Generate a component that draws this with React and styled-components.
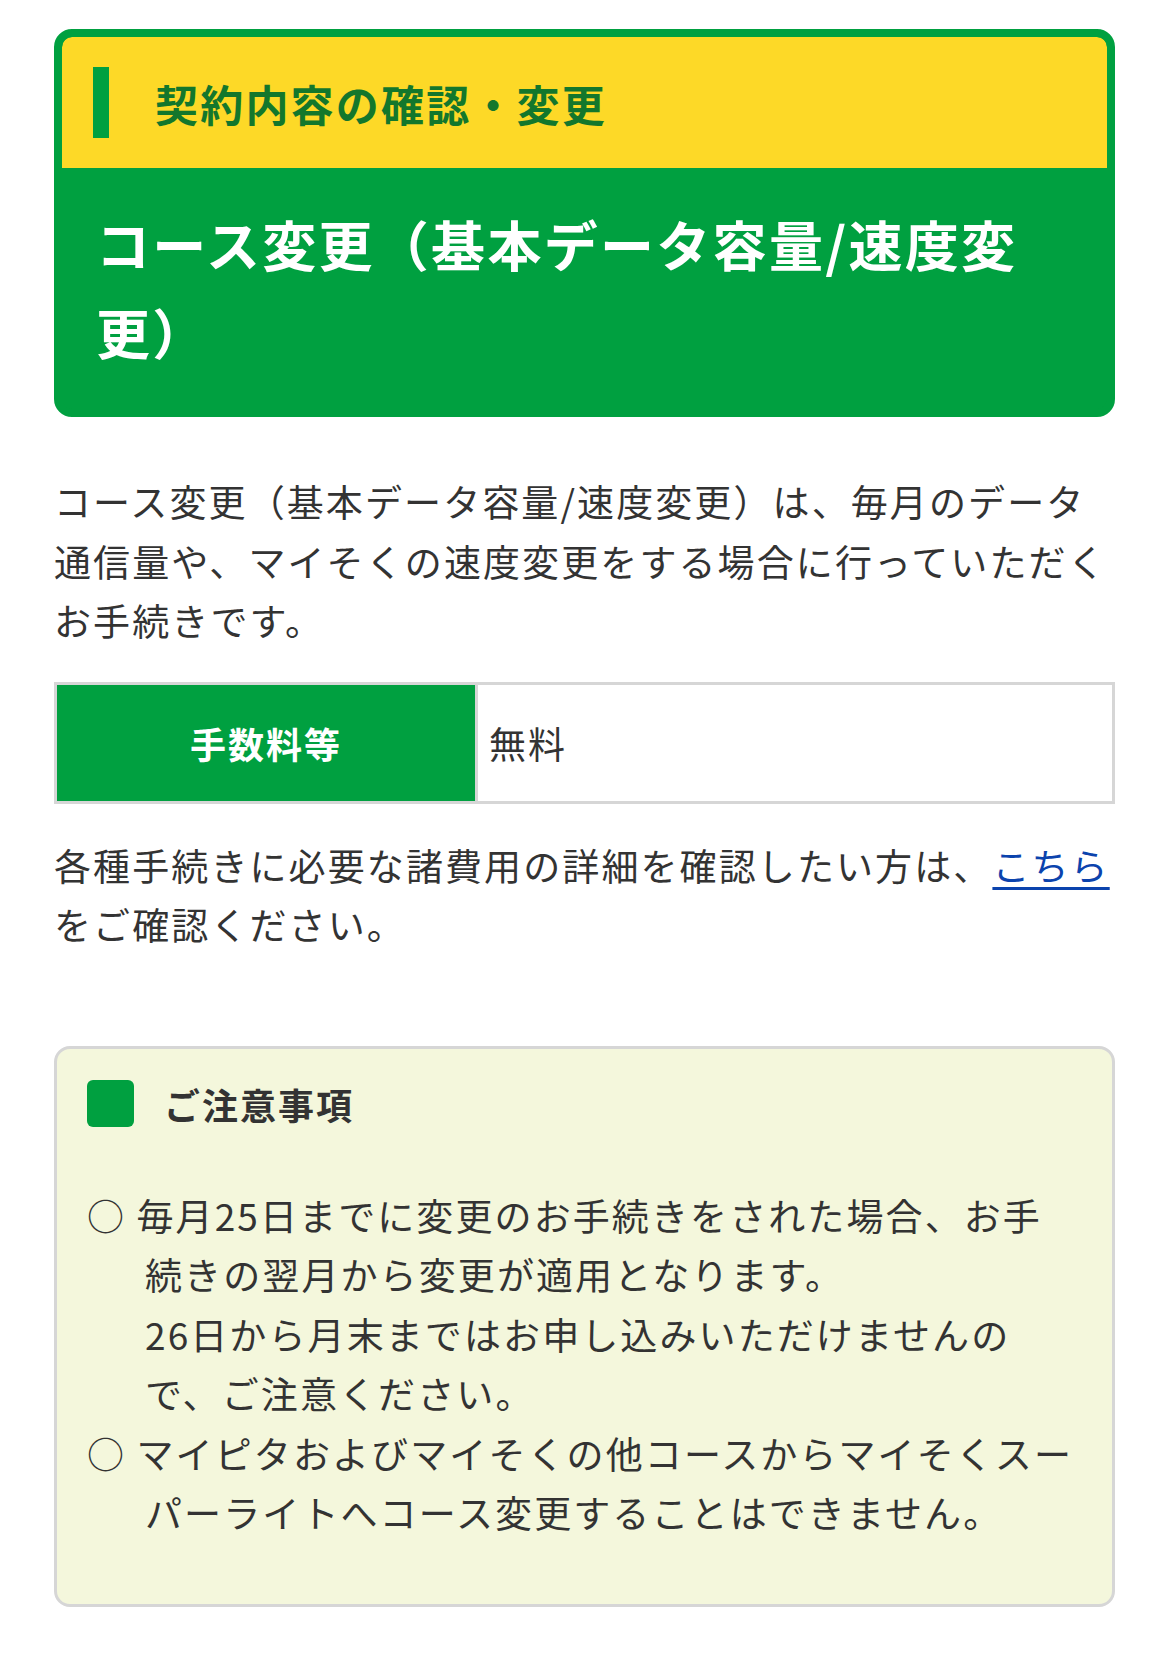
import styled, { createGlobalStyle } from "styled-components";

const GlobalStyle = createGlobalStyle`
  body {
    margin: 0;
    background: #fff;
    font-family: "Noto Sans CJK JP", "Noto Sans", sans-serif;
    color: #333;
  }
`;

const App = () => {
  return (
    <Page>
      <GlobalStyle />
      <Card>
        <CardHead>
          <HeadBar />
          <HeadText>契約内容の確認・変更</HeadText>
        </CardHead>
        <Title>コース変更（基本データ容量/速度変更）</Title>
      </Card>

      <Lead>
        コース変更（基本データ容量/速度変更）は、毎月のデータ通信量や、マイそくの速度変更をする場合に行っていただくお手続きです。
      </Lead>

      <FeeTable>
        <tbody>
          <tr>
            <FeeHead>手数料等</FeeHead>
            <FeeCell>無料</FeeCell>
          </tr>
        </tbody>
      </FeeTable>

      <Lead $top={32}>
        各種手続きに必要な諸費用の詳細を確認したい方は、<Link href="#">こちら</Link>をご確認ください。
      </Lead>

      <Notes>
        <NotesHead>
          <NotesMark />
          <NotesTitle>ご注意事項</NotesTitle>
        </NotesHead>
        <NoteList>
          <NoteItem>
            ○ 毎月25日までに変更のお手続きをされた場合、お手続きの翌月から変更が適用となります。
            <br />
            26日から月末まではお申し込みいただけませんので、ご注意ください。
          </NoteItem>
          <NoteItem>
            ○ マイピタおよびマイそくの他コースからマイそくスーパーライトへコース変更することはできません。
          </NoteItem>
        </NoteList>
      </Notes>
    </Page>
  );
};

export default App;

const Page = styled.div`
  padding: 29px 55px 62px 54px;
`;

const Card = styled.section`
  background: #00a040;
  border: 8px solid #00a040;
  border-radius: 18px;
  overflow: hidden;
`;

const CardHead = styled.div`
  display: flex;
  align-items: center;
  gap: 46px;
  height: 131px;
  padding: 0 31px;
  background: #fdd927;
  border-radius: 10px 10px 0 0;
  box-sizing: border-box;
`;

const HeadBar = styled.span`
  width: 16px;
  height: 71px;
  background: #00a040;
  flex-shrink: 0;
`;

const HeadText = styled.h2`
  margin: 0;
  font-size: 43px;
  font-weight: 700;
  letter-spacing: 2.2px;
  color: #13772c;
`;

const Title = styled.h1`
  margin: 0;
  padding: 32px 30px 33px 34px;
  font-size: 54px;
  line-height: 88px;
  font-weight: 700;
  letter-spacing: 2.3px;
  color: #fff;
`;

const Lead = styled.p`
  margin: ${(p) => p.$top ?? 55}px 0 0;
  font-size: 37px;
  line-height: 59.5px;
  letter-spacing: 2.1px;
  color: #333;
`;

const Link = styled.a`
  color: #0b43ad;
  text-decoration: underline;
  text-underline-offset: 6px;
`;

const FeeTable = styled.table`
  width: 100%;
  margin-top: 31px;
  border-collapse: collapse;
  border: 3px solid #d6d6d6;
`;

const FeeHead = styled.th`
  width: 418px;
  height: 116px;
  padding: 0;
  background: #00a040;
  border-right: 3px solid #d6d6d6;
  color: #fff;
  font-size: 36px;
  font-weight: 700;
  letter-spacing: 2px;
  text-align: center;
`;

const FeeCell = styled.td`
  padding: 0 11px;
  background: #fff;
  font-size: 37px;
  letter-spacing: 2.1px;
  color: #333;
`;

const Notes = styled.section`
  margin-top: 91px;
  padding: 29px 35px 61px 30px;
  background: #f4f7dc;
  border: 3px solid #d6d6d6;
  border-radius: 16px;
`;

const NotesHead = styled.div`
  display: flex;
  align-items: center;
  gap: 30px;
`;

const NotesMark = styled.span`
  width: 47px;
  height: 47px;
  border-radius: 6px;
  background: #00a040;
  flex-shrink: 0;
`;

const NotesTitle = styled.h3`
  margin: 0;
  font-size: 36px;
  font-weight: 700;
  letter-spacing: 2px;
  color: #333;
`;

const NoteList = styled.ul`
  list-style: none;
  margin: 56px 0 0;
  padding: 0;
`;

const NoteItem = styled.li`
  padding-left: 58px;
  text-indent: -58px;
  font-size: 37px;
  line-height: 59.5px;
  letter-spacing: 2.1px;
  color: #333;
`;
